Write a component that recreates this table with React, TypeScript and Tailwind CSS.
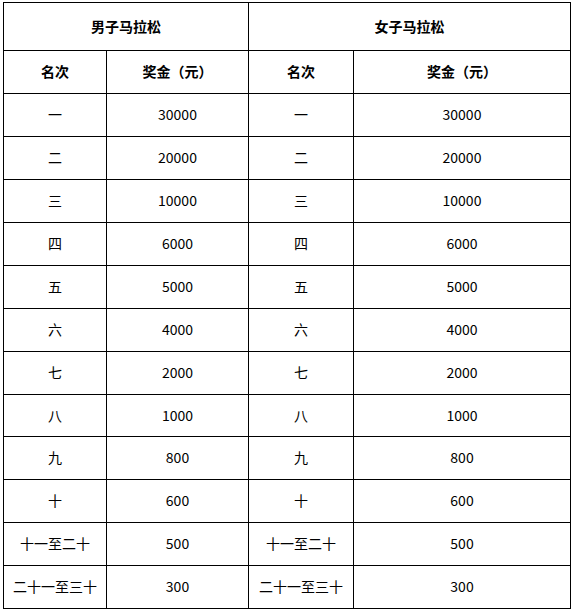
const rows: [string, string][] = [
  ['一', '30000'],
  ['二', '20000'],
  ['三', '10000'],
  ['四', '6000'],
  ['五', '5000'],
  ['六', '4000'],
  ['七', '2000'],
  ['八', '1000'],
  ['九', '800'],
  ['十', '600'],
  ['十一至二十', '500'],
  ['二十一至三十', '300'],
];

const cell = 'border border-black text-center align-middle p-0 pb-[2px]';

export default function App() {
  return (
    <div
      className="min-h-screen bg-white pl-[3px] pt-[2px] text-[14px] leading-none text-black"
      style={{ fontFamily: '"Noto Sans CJK SC", "Noto Sans", sans-serif' }}
    >
      <table className="border-collapse table-fixed w-[567px]">
        <colgroup>
          <col className="w-[103px]" />
          <col className="w-[142px]" />
          <col className="w-[105px]" />
          <col className="w-[217px]" />
        </colgroup>
        <thead>
          <tr className="h-[48px]">
            <th colSpan={2} className={`${cell} font-bold`}>男子马拉松</th>
            <th colSpan={2} className={`${cell} font-bold`}>女子马拉松</th>
          </tr>
          <tr className="h-[43px]">
            <th className={`${cell} font-bold`}>名次</th>
            <th className={`${cell} font-bold`}>奖金（元）</th>
            <th className={`${cell} font-bold`}>名次</th>
            <th className={`${cell} font-bold`}>奖金（元）</th>
          </tr>
        </thead>
        <tbody>
          {rows.map(([rank, prize]) => (
            <tr key={rank} className={rank === '八' ? 'h-[42px]' : 'h-[43px]'}>
              <td className={cell}>{rank}</td>
              <td className={cell}>{prize}</td>
              <td className={cell}>{rank}</td>
              <td className={cell}>{prize}</td>
            </tr>
          ))}
        </tbody>
      </table>
    </div>
  );
}
